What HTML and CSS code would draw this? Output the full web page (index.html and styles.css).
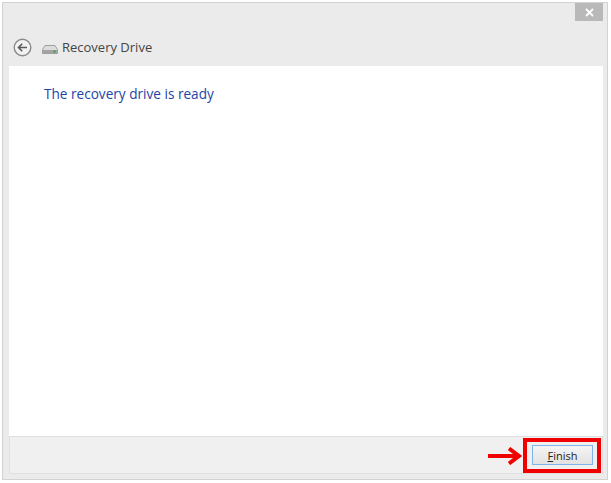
FILE: index.html
```html
<!DOCTYPE html>
<html>
<head>
    <title>Recovery Drive</title>
    <link rel="stylesheet" href="styles.css">
</head>
<body>
    <div class="window">
        <div class="titlebar">
            <div class="close">
                <svg width="9" height="9" viewBox="0 0 9 9"><path d="M1 1L8 8M8 1L1 8" stroke="#fff" stroke-width="1.8" fill="none"/></svg>
            </div>
        </div>
        <div class="header">
            <svg class="back" width="19" height="19" viewBox="0 0 19 19">
                <circle cx="9.5" cy="9.5" r="8.3" fill="#f2f2f2" stroke="#8a8a8a" stroke-width="1.4"/>
                <path d="M14 9.5H6M9.2 5.8L5.5 9.5L9.2 13.2" stroke="#5a5a5a" stroke-width="1.6" fill="none"/>
            </svg>
            <svg class="drive" width="16" height="9" viewBox="0 0 16 9">
                <path d="M3 0.5H13L15.5 4.5V8.5H0.5V4.5Z" fill="#dcdcdc" stroke="#8f8f8f" stroke-width="0.8"/>
                <rect x="1" y="5" width="14" height="3" fill="#a3a3a3"/>
                <rect x="11.5" y="5.5" width="2" height="2" fill="#3fa03f"/>
            </svg>
            <span class="title">Recovery Drive</span>
        </div>
        <div class="content">
            <h1 class="heading">The recovery drive is ready</h1>
        </div>
        <div class="footer">
            <button class="finish"><u>F</u>inish</button>
        </div>
    </div>

    <svg class="arrow" width="34" height="18" viewBox="0 0 34 18">
        <path d="M0 9H30M21 1.5L31 9L21 16.5" stroke="#f00000" stroke-width="4" fill="none"/>
    </svg>
    <div class="callout"></div>
</body>
</html>
```

FILE: styles.css
```css
html, body {
    margin: 0;
    padding: 0;
    background: #ffffff;
}
body {
    position: relative;
    width: 611px;
    height: 483px;
    overflow: hidden;
    font-family: "Open Sans", "Noto Sans", sans-serif;
}
.window {
    box-sizing: border-box;
    width: 606px;
    height: 478px;
    margin: 2px 0 0 2px;
    padding: 0 4px 5px 6px;
    background: #ebebeb;
    border: 1px solid #d2d2d2;
    display: flex;
    flex-direction: column;
}
.titlebar {
    height: 18px;
    display: flex;
    justify-content: flex-end;
}
.close {
    width: 28px;
    height: 18px;
    background: #b9b9b9;
    display: flex;
    align-items: center;
    justify-content: center;
}
.header {
    height: 45px;
    display: flex;
    align-items: center;
    padding-left: 4px;
    box-sizing: border-box;
    padding-top: 7px;
}
.back {
    margin-right: 10px;
}
.drive {
    margin-right: 4px;
    margin-top: 4px;
}
.title {
    font-size: 13px;
    color: #444444;
}
.content {
    flex: 1;
    background: #ffffff;
    padding: 18px 35px;
}
.heading {
    margin: 0;
    font-size: 13.6px;
    font-weight: normal;
    line-height: 20px;
    color: #1e44a8;
}
.footer {
    height: 38px;
    box-sizing: border-box;
    background: #f0f0f0;
    border: 1px solid #dfdfdf;
    display: flex;
    align-items: center;
    justify-content: flex-end;
    padding-right: 9px;
}
.finish {
    box-sizing: border-box;
    width: 61px;
    height: 20px;
    padding: 0;
    border: 1px solid #7eb4ea;
    background: linear-gradient(#f5f5f5, #e2e2e2);
    font-family: "Open Sans", "Noto Sans", sans-serif;
    font-size: 11px;
    color: #222222;
}
.arrow {
    position: absolute;
    left: 488px;
    top: 447px;
}
.callout {
    position: absolute;
    left: 523px;
    top: 438px;
    width: 70px;
    height: 27px;
    border: 4px solid #f00000;
}
```
